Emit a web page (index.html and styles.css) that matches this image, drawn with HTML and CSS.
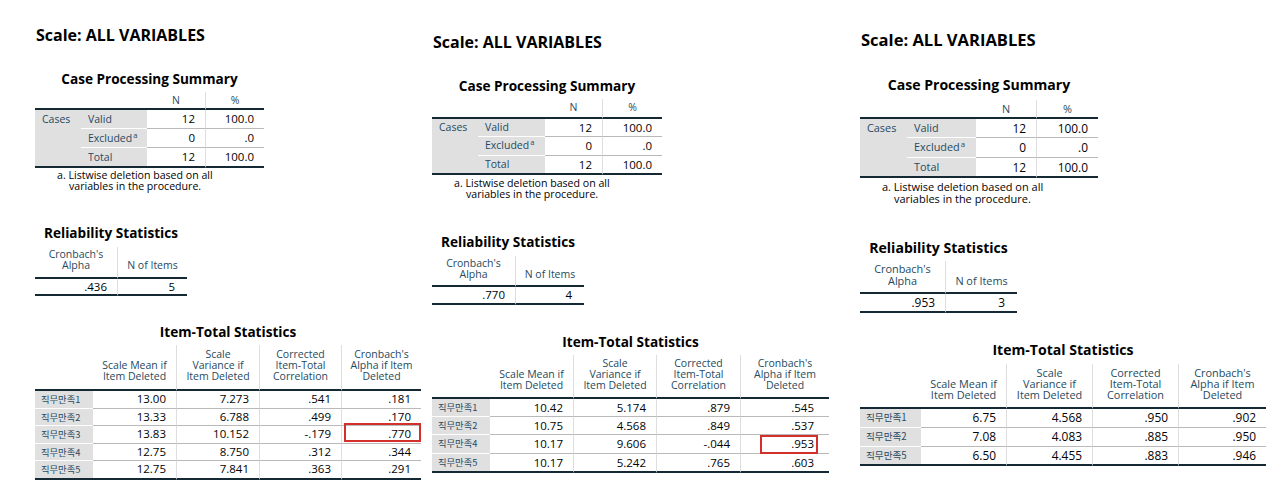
FILE: index.html
```html
<!DOCTYPE html>
<html lang="ko">
<head>
<meta charset="utf-8">
<title>Reliability Analysis – Scale: ALL VARIABLES</title>
<link rel="stylesheet" href="styles.css">
</head>
<body>
<main class="page">

  <section class="panel p1">
    <h1 class="scale-title">Scale: ALL VARIABLES</h1>
    <div class="block cps">
      <h2 class="tbl-title">Case Processing Summary</h2>
      <table class="spss">
        <colgroup><col class="k1"><col class="k2"><col class="k3"><col class="k4"></colgroup>
        <thead><tr><th colspan="2"></th><th class="sep">N</th><th>%</th></tr></thead>
        <tbody>
          <tr><th rowspan="3" class="rl grp">Cases</th><th class="rl">Valid</th><td class="sep">12</td><td>100.0</td></tr>
          <tr><th class="rl">Excluded<sup>a</sup></th><td class="sep">0</td><td>.0</td></tr>
          <tr><th class="rl">Total</th><td class="sep">12</td><td>100.0</td></tr>
        </tbody>
      </table>
      <p class="foot">a. Listwise deletion based on all<br>variables in the procedure.</p>
    </div>
    <div class="block rel">
      <h2 class="tbl-title">Reliability Statistics</h2>
      <table class="spss">
        <colgroup><col class="r1"><col class="r2"></colgroup>
        <thead><tr><th class="sep">Cronbach's<br>Alpha</th><th>N of Items</th></tr></thead>
        <tbody><tr><td class="sep">.436</td><td>5</td></tr></tbody>
      </table>
    </div>
    <div class="block its">
      <h2 class="tbl-title">Item-Total Statistics</h2>
      <table class="spss">
        <colgroup><col class="i1"><col class="i2"><col class="i3"><col class="i4"><col class="i5"></colgroup>
        <thead><tr><th></th><th class="sep">Scale Mean if<br>Item Deleted</th><th class="sep">Scale<br>Variance if<br>Item Deleted</th><th class="sep">Corrected<br>Item-Total<br>Correlation</th><th>Cronbach's<br>Alpha if Item<br>Deleted</th></tr></thead>
        <tbody>
          <tr><th class="rl kr">직무만족1</th><td class="sep">13.00</td><td class="sep">7.273</td><td class="sep">.541</td><td>.181</td></tr>
          <tr><th class="rl kr">직무만족2</th><td class="sep">13.33</td><td class="sep">6.788</td><td class="sep">.499</td><td>.170</td></tr>
          <tr><th class="rl kr">직무만족3</th><td class="sep">13.83</td><td class="sep">10.152</td><td class="sep">-.179</td><td class="hl">.770</td></tr>
          <tr><th class="rl kr">직무만족4</th><td class="sep">12.75</td><td class="sep">8.750</td><td class="sep">.312</td><td>.344</td></tr>
          <tr><th class="rl kr">직무만족5</th><td class="sep">12.75</td><td class="sep">7.841</td><td class="sep">.363</td><td>.291</td></tr>
        </tbody>
      </table>
    </div>
  </section>

  <section class="panel p2">
    <h1 class="scale-title">Scale: ALL VARIABLES</h1>
    <div class="block cps">
      <h2 class="tbl-title">Case Processing Summary</h2>
      <table class="spss">
        <colgroup><col class="k1"><col class="k2"><col class="k3"><col class="k4"></colgroup>
        <thead><tr><th colspan="2"></th><th class="sep">N</th><th>%</th></tr></thead>
        <tbody>
          <tr><th rowspan="3" class="rl grp">Cases</th><th class="rl">Valid</th><td class="sep">12</td><td>100.0</td></tr>
          <tr><th class="rl">Excluded<sup>a</sup></th><td class="sep">0</td><td>.0</td></tr>
          <tr><th class="rl">Total</th><td class="sep">12</td><td>100.0</td></tr>
        </tbody>
      </table>
      <p class="foot">a. Listwise deletion based on all<br>variables in the procedure.</p>
    </div>
    <div class="block rel">
      <h2 class="tbl-title">Reliability Statistics</h2>
      <table class="spss">
        <colgroup><col class="r1"><col class="r2"></colgroup>
        <thead><tr><th class="sep">Cronbach's<br>Alpha</th><th>N of Items</th></tr></thead>
        <tbody><tr><td class="sep">.770</td><td>4</td></tr></tbody>
      </table>
    </div>
    <div class="block its">
      <h2 class="tbl-title">Item-Total Statistics</h2>
      <table class="spss">
        <colgroup><col class="i1"><col class="i2"><col class="i3"><col class="i4"><col class="i5"></colgroup>
        <thead><tr><th></th><th class="sep">Scale Mean if<br>Item Deleted</th><th class="sep">Scale<br>Variance if<br>Item Deleted</th><th class="sep">Corrected<br>Item-Total<br>Correlation</th><th>Cronbach's<br>Alpha if Item<br>Deleted</th></tr></thead>
        <tbody>
          <tr><th class="rl kr">직무만족1</th><td class="sep">10.42</td><td class="sep">5.174</td><td class="sep">.879</td><td class="last">.545</td></tr>
          <tr><th class="rl kr">직무만족2</th><td class="sep">10.75</td><td class="sep">4.568</td><td class="sep">.849</td><td class="last">.537</td></tr>
          <tr><th class="rl kr">직무만족4</th><td class="sep">10.17</td><td class="sep">9.606</td><td class="sep">-.044</td><td class="last hl">.953</td></tr>
          <tr><th class="rl kr">직무만족5</th><td class="sep">10.17</td><td class="sep">5.242</td><td class="sep">.765</td><td class="last">.603</td></tr>
        </tbody>
      </table>
    </div>
  </section>

  <section class="panel p3">
    <h1 class="scale-title">Scale: ALL VARIABLES</h1>
    <div class="block cps">
      <h2 class="tbl-title">Case Processing Summary</h2>
      <table class="spss">
        <colgroup><col class="k1"><col class="k2"><col class="k3"><col class="k4"></colgroup>
        <thead><tr><th colspan="2"></th><th class="sep">N</th><th>%</th></tr></thead>
        <tbody>
          <tr><th rowspan="3" class="rl grp">Cases</th><th class="rl">Valid</th><td class="sep">12</td><td>100.0</td></tr>
          <tr><th class="rl">Excluded<sup>a</sup></th><td class="sep">0</td><td>.0</td></tr>
          <tr><th class="rl">Total</th><td class="sep">12</td><td>100.0</td></tr>
        </tbody>
      </table>
      <p class="foot">a. Listwise deletion based on all<br>variables in the procedure.</p>
    </div>
    <div class="block rel">
      <h2 class="tbl-title">Reliability Statistics</h2>
      <table class="spss">
        <colgroup><col class="r1"><col class="r2"></colgroup>
        <thead><tr><th class="sep">Cronbach's<br>Alpha</th><th>N of Items</th></tr></thead>
        <tbody><tr><td class="sep">.953</td><td>3</td></tr></tbody>
      </table>
    </div>
    <div class="block its">
      <h2 class="tbl-title">Item-Total Statistics</h2>
      <table class="spss">
        <colgroup><col class="i1"><col class="i2"><col class="i3"><col class="i4"><col class="i5"></colgroup>
        <thead><tr><th></th><th class="sep">Scale Mean if<br>Item Deleted</th><th class="sep">Scale<br>Variance if<br>Item Deleted</th><th class="sep">Corrected<br>Item-Total<br>Correlation</th><th>Cronbach's<br>Alpha if Item<br>Deleted</th></tr></thead>
        <tbody>
          <tr><th class="rl kr">직무만족1</th><td class="sep">6.75</td><td class="sep">4.568</td><td class="sep">.950</td><td>.902</td></tr>
          <tr><th class="rl kr">직무만족2</th><td class="sep">7.08</td><td class="sep">4.083</td><td class="sep">.885</td><td>.950</td></tr>
          <tr><th class="rl kr">직무만족5</th><td class="sep">6.50</td><td class="sep">4.455</td><td class="sep">.883</td><td>.946</td></tr>
        </tbody>
      </table>
    </div>
  </section>

</main>
</body>
</html>
```

FILE: styles.css
```css
* { box-sizing: border-box; }

html, body {
  margin: 0;
  padding: 0;
  background: #ffffff;
}

body {
  font-family: "Open Sans", "Noto Sans", "DejaVu Sans", sans-serif;
  color: #000000;
}

.page {
  display: grid;
  grid-template-columns: 397px 428px 1fr;
  padding-left: 35px;
  height: 483px;
  overflow: hidden;
}

/* ---------- per-panel metrics ---------- */
.panel { --k: 1; padding-top: var(--pt); }

.p1 {
  --pt: 25px; --g1: 25px; --cg: 5px; --chl: 16px; --clh: 18px;
  --fg: 2px; --flh: 11px; --g2: 32px;
  --rg: 6px; --rpt: 1.5px; --rhl: 11.5px; --rpb: 5.5px; --rlh: 15px;
  --g3: 27px; --ig: 5px; --ipt: 3.5px; --ihl: 11px; --ipb: 7.5px; --ilh: 16.6px;
  --k1: 46px; --k2: 66px; --k3: 59px; --k4: 58px;
  --r1: 83px; --r2: 69px;
  --i1: 58px; --i2: 84px; --i3: 83px; --i4: 82px; --i5: 79px;
}

.p2 {
  --pt: 32px; --g1: 25px; --cg: 5px; --chl: 17.5px; --clh: 17.6px;
  --fg: 2.5px; --flh: 11px; --g2: 33px;
  --rg: 6px; --rpt: 2px; --rhl: 11px; --rpb: 5.2px; --rlh: 16.3px;
  --g3: 27.5px; --ig: 5.2px; --ipt: 2.7px; --ihl: 11.2px; --ipb: 5.4px; --ilh: 17.3px;
  --k1: 46px; --k2: 67px; --k3: 58px; --k4: 59px;
  --r1: 84px; --r2: 68px;
  --i1: 58px; --i2: 84px; --i3: 83px; --i4: 84px; --i5: 88px;
}

.p3 {
  --k: 1.035;
  --pt: 30px; --g1: 26.4px; --cg: 6.2px; --chl: 17.3px; --clh: 18.4px;
  --fg: 2.5px; --flh: 12px; --g2: 34px;
  --rg: 5.2px; --rpt: 2px; --rhl: 12px; --rpb: 5.7px; --rlh: 16.3px;
  --g3: 28px; --ig: 6.3px; --ipt: 2.5px; --ihl: 11px; --ipb: 7.5px; --ilh: 17.8px;
  --k1: 47px; --k2: 69px; --k3: 61px; --k4: 61px;
  --r1: 86px; --r2: 71px;
  --i1: 61px; --i2: 86px; --i3: 86px; --i4: 86px; --i5: 87px;
}

/* ---------- titles ---------- */
.scale-title {
  margin: 0 0 0 1px;
  font-size: calc(16px * var(--k));
  line-height: 20px;
  font-weight: 700;
  color: #000;
}

.block { width: max-content; }

.tbl-title {
  margin: 0;
  font-size: calc(13.6px * var(--k));
  line-height: 17px;
  font-weight: 700;
  text-align: center;
  color: #000;
  white-space: nowrap;
}

.cps { margin-top: var(--g1); }
.rel { margin-top: var(--g2); }
.its { margin-top: var(--g3); }

.cps .spss { margin-top: var(--cg); }
.rel .spss { margin-top: var(--rg); }
.its .spss { margin-top: var(--ig); }

/* ---------- column widths ---------- */
.cps col.k1 { width: var(--k1); }
.cps col.k2 { width: var(--k2); }
.cps col.k3 { width: var(--k3); }
.cps col.k4 { width: var(--k4); }
.rel col.r1 { width: var(--r1); }
.rel col.r2 { width: var(--r2); }
.its col.i1 { width: var(--i1); }
.its col.i2 { width: var(--i2); }
.its col.i3 { width: var(--i3); }
.its col.i4 { width: var(--i4); }
.its col.i5 { width: var(--i5); }

/* ---------- SPSS table ---------- */
.spss {
  border-collapse: separate;
  border-spacing: 0;
  font-size: calc(10.5px * var(--k));
  color: #264a60;
}

.spss th,
.spss td {
  padding: 0;
  white-space: nowrap;
  font-weight: 400;
}

.spss thead th {
  text-align: center;
  vertical-align: bottom;
  border-bottom: 2px solid #152935;
  padding: 0 3px;
}

.cps thead th { line-height: var(--chl); }
.rel thead th { line-height: var(--rhl); padding-top: var(--rpt); padding-bottom: var(--rpb); }
.its thead th { line-height: var(--ihl); padding-top: var(--ipt); padding-bottom: var(--ipb); }

.spss tbody th,
.spss tbody td {
  border-bottom: 1px solid #b9b9b9;
}

.cps tbody th, .cps tbody td { line-height: var(--clh); }
.rel tbody td { line-height: var(--rlh); }
.its tbody th, .its tbody td { line-height: var(--ilh); }

.spss tbody th.rl {
  text-align: left;
  background: #e0e0e0;
  padding-left: 7px;
  border-bottom-color: #ffffff;
  vertical-align: middle;
}

.spss tbody th.grp {
  vertical-align: top;
}

.spss tbody th.kr {
  font-family: "Noto Sans CJK KR", "Noto Sans", sans-serif;
  font-size: calc(9.3px * var(--k));
  padding-left: 6px;
}

.spss tbody td {
  text-align: right;
  color: #010205;
  font-size: calc(11.5px * var(--k));
  padding-right: 10px;
}

.p2 .its tbody td.last { padding-right: 15px; }
.rel tbody td:last-child { padding-right: 12px; }

.spss tbody tr:last-child > th,
.spss tbody tr:last-child > td,
.spss tbody th.grp {
  border-bottom: 2px solid #152935;
}

.spss .sep { border-right: 1px solid #dedede; }

.spss sup {
  font-size: 0.72em;
  line-height: 0;
  vertical-align: 4px;
  margin-left: 1px;
}

/* ---------- footnote ---------- */
.foot {
  margin: var(--fg) 0 0 22px;
  padding-left: 12px;
  text-indent: -12px;
  font-size: calc(10.6px * var(--k));
  line-height: var(--flh);
  color: #010205;
  white-space: nowrap;
}

/* ---------- red highlight annotation ---------- */
.spss td.hl { position: relative; }
.spss td.hl::after {
  content: "";
  position: absolute;
  border: 2.5px solid #d3302b;
}
.p1 td.hl::after { top: -3px; bottom: 1px; left: 1.5px; right: 0; }
.p2 td.hl::after { top: 0; bottom: -1.6px; left: 18.5px; right: 11px; }
```
